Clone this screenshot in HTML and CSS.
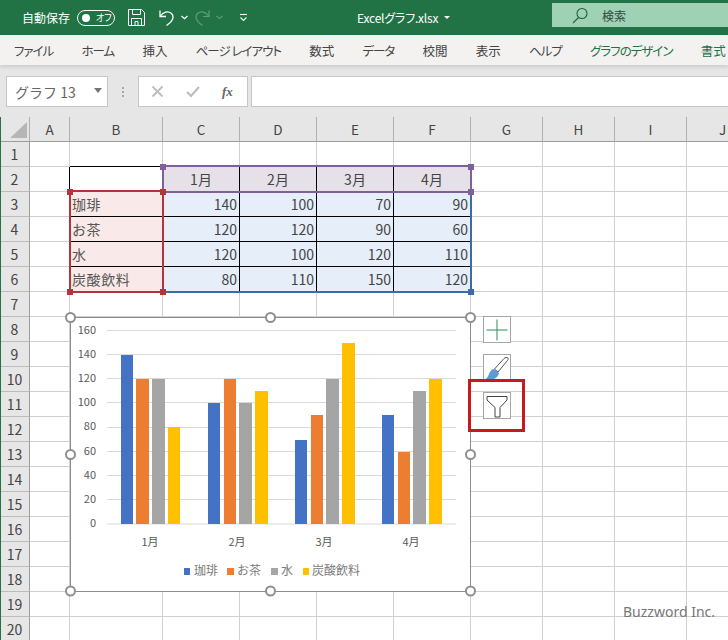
FILE: index.html
```html
<!DOCTYPE html>
<html lang="ja">
<head>
<meta charset="utf-8">
<title>Excelグラフ.xlsx</title>
<link rel="stylesheet" href="styles.css">
</head>
<body>
<div class="app">
  <header class="titlebar">
    <span class="autosave">自動保存</span>
    <span class="toggle"><i class="dot"></i><span class="off">オフ</span></span>
    <svg class="qa save" width="17" height="17" viewBox="0 0 17 17" fill="none" stroke="#fff" stroke-width="1"><path d="M.5.5h13l3 3v13H.5z"/><path d="M4.5.5v5h8v-5M3.5 16.5v-7h10v7M7 16.5v-4h3v4"/></svg>
    <svg class="qa undo" width="16" height="17" viewBox="0 0 16 17" fill="none" stroke="#fff" stroke-width="1.3"><path d="M1 1.5v6h6"/><path d="M1.5 7C4 3 9 1.500 12.500 4.500c3 3 1.500 8-5 12"/></svg>
    <svg class="qa chev" width="7" height="5" viewBox="0 0 7 5" fill="none" stroke="#fff" stroke-width="1.200"><path d="M.5 1l3 2.600 3-2.600"/></svg>
    <svg class="qa redo" width="16" height="17" viewBox="0 0 16 17" fill="none" stroke="#5f9c7d" stroke-width="1.200"><path d="M15 1.500v6H9"/><path d="M14.500 7C12 3 7 1.500 3.500 4.500c-3 3-1.500 8 5 12"/></svg>
    <svg class="qa chev2" width="7" height="5" viewBox="0 0 7 5" fill="none" stroke="#5f9c7d" stroke-width="1.100"><path d="M.5 1l3 2.600 3-2.600"/></svg>
    <svg class="qa custom" width="7" height="9" viewBox="0 0 7 9" fill="none" stroke="#fff" stroke-width="1.100"><path d="M0 1.500h7"/><path d="M.5 4.500l3 3 3-3" /></svg>
    <span class="doc">Excelグラフ.xlsx</span>
    <span class="doc-arrow"></span>
    <div class="search">
      <svg width="16" height="17" viewBox="0 0 16 17" fill="none" stroke="#1f5f40" stroke-width="1.100"><circle cx="10" cy="6.500" r="5"/><path d="M6.500 10.500L1 16"/></svg>
      <span>検索</span>
    </div>
  </header>

  <nav class="ribbon">
    <span class="kana">ファイル</span><span class="kana">ホーム</span><span>挿入</span><span class="kana">ページ レイアウト</span><span>数式</span><span class="kana">データ</span><span>校閲</span><span>表示</span><span class="kana">ヘルプ</span><span class="ctx kana">グラフのデザイン</span><span class="ctx">書式</span>
  </nav>

  <section class="formula">
    <div class="namebox"><span>グラフ 13</span><i class="name-arrow"></i></div>
    <div class="grip"><i></i><i></i><i></i></div>
    <div class="fx-buttons">
      <svg width="13" height="13" viewBox="0 0 13 13" stroke="#bdbdbd" stroke-width="1.800" fill="none"><path d="M1.500 1.500l10 10M11.500 1.500l-10 10"/></svg>
      <svg width="14" height="13" viewBox="0 0 14 13" stroke="#bdbdbd" stroke-width="2.200" fill="none"><path d="M1 7l4 4 8-9"/></svg>
      <span class="fx">fx</span>
    </div>
    <div class="input"></div>
  </section>

  <main class="sheet">
    <div class="corner"><i></i></div><div class="ch">A</div><div class="ch">B</div><div class="ch">C</div><div class="ch">D</div><div class="ch">E</div><div class="ch">F</div><div class="ch">G</div><div class="ch">H</div><div class="ch">I</div><div class="ch">J</div>

    <div class="rh">1</div><div></div><div class="kb"></div><div></div><div></div><div></div><div></div><div></div><div></div><div></div><div></div>
    <div class="rh">2</div><div class="kr"></div><div></div><div class="head kr">1月</div><div class="head kr">2月</div><div class="head kr">3月</div><div class="head">4月</div><div></div><div></div><div></div><div></div>
    <div class="rh">3</div><div></div><div class="lab kb">珈琲</div><div class="num kb kr">140</div><div class="num kb kr">100</div><div class="num kb kr">70</div><div class="num kb">90</div><div></div><div></div><div></div><div></div>
    <div class="rh">4</div><div></div><div class="lab kb">お茶</div><div class="num kb kr">120</div><div class="num kb kr">120</div><div class="num kb kr">90</div><div class="num kb">60</div><div></div><div></div><div></div><div></div>
    <div class="rh">5</div><div></div><div class="lab kb">水</div><div class="num kb kr">120</div><div class="num kb kr">100</div><div class="num kb kr">120</div><div class="num kb">110</div><div></div><div></div><div></div><div></div>
    <div class="rh">6</div><div></div><div class="lab">炭酸飲料</div><div class="num kr">80</div><div class="num kr">110</div><div class="num kr">150</div><div class="num">120</div><div></div><div></div><div></div><div></div>
    <div class="rh">7</div><div></div><div></div><div></div><div></div><div></div><div></div><div></div><div></div><div></div><div></div>
    <div class="rh">8</div><div></div><div></div><div></div><div></div><div></div><div></div><div></div><div></div><div></div><div></div>
    <div class="rh">9</div><div></div><div></div><div></div><div></div><div></div><div></div><div></div><div></div><div></div><div></div>
    <div class="rh">10</div><div></div><div></div><div></div><div></div><div></div><div></div><div></div><div></div><div></div><div></div>
    <div class="rh">11</div><div></div><div></div><div></div><div></div><div></div><div></div><div></div><div></div><div></div><div></div>
    <div class="rh">12</div><div></div><div></div><div></div><div></div><div></div><div></div><div></div><div></div><div></div><div></div>
    <div class="rh">13</div><div></div><div></div><div></div><div></div><div></div><div></div><div></div><div></div><div></div><div></div>
    <div class="rh">14</div><div></div><div></div><div></div><div></div><div></div><div></div><div></div><div></div><div></div><div></div>
    <div class="rh">15</div><div></div><div></div><div></div><div></div><div></div><div></div><div></div><div></div><div></div><div></div>
    <div class="rh">16</div><div></div><div></div><div></div><div></div><div></div><div></div><div></div><div></div><div></div><div></div>
    <div class="rh">17</div><div></div><div></div><div></div><div></div><div></div><div></div><div></div><div></div><div></div><div></div>
    <div class="rh">18</div><div></div><div></div><div></div><div></div><div></div><div></div><div></div><div></div><div></div><div></div>
    <div class="rh">19</div><div></div><div></div><div></div><div></div><div></div><div></div><div></div><div></div><div></div><div></div>
    <div class="rh">20</div><div></div><div></div><div></div><div></div><div></div><div></div><div></div><div></div><div></div><div></div>
  </main>

  <!-- source-range highlights over the grid -->
  <div class="range r-blue"></div>
  <div class="range r-purple"></div>
  <div class="range r-red"></div>
  <i class="h-sq purple h2"></i><i class="h-sq purple h3"></i><i class="h-sq purple h4"></i><i class="h-sq red h1"></i><i class="h-sq red h6"></i><i class="h-sq red h7"></i><i class="h-sq red h8"></i><i class="h-sq blue h9"></i>

  <!-- chart object -->
  <svg class="chart" viewBox="62 309 418 290" width="418" height="290">
    <rect class="frame" x="70.500" y="317.500" width="400" height="274"/>
    <g class="gl">
      <path d="M107 330.500h349M107 354.500h349M107 378.500h349M107 402.500h349M107 427.500h349M107 451.500h349M107 475.500h349M107 499.500h349M107 524h349"/>
    </g>
    <g class="b1">
      <rect x="121" y="355" width="12" height="169"/><rect x="208" y="403" width="12" height="121"/><rect x="295" y="440" width="12" height="84"/><rect x="382" y="415" width="12" height="109"/>
    </g>
    <g class="b2">
      <rect x="136" y="379" width="13" height="145"/><rect x="224" y="379" width="12" height="145"/><rect x="311" y="415" width="12" height="109"/><rect x="398" y="452" width="12" height="72"/>
    </g>
    <g class="b3">
      <rect x="152" y="379" width="13" height="145"/><rect x="239" y="403" width="13" height="121"/><rect x="326" y="379" width="13" height="145"/><rect x="413" y="391" width="13" height="133"/>
    </g>
    <g class="b4">
      <rect x="168" y="427" width="12" height="97"/><rect x="255" y="391" width="13" height="133"/><rect x="342" y="343" width="13" height="181"/><rect x="429" y="379" width="13" height="145"/>
    </g>
    <g class="ya">
      <text x="96" y="334">160</text><text x="96" y="358">140</text><text x="96" y="382">120</text><text x="96" y="406">100</text><text x="96" y="430">80</text><text x="96" y="455">60</text><text x="96" y="479">40</text><text x="96" y="503">20</text><text x="96" y="527">0</text>
    </g>
    <g class="xa">
      <text x="150" y="546">1月</text><text x="237" y="546">2月</text><text x="324" y="546">3月</text><text x="411" y="546">4月</text>
    </g>
    <g class="lg">
      <rect class="s1" x="184" y="568" width="6" height="7"/><text x="194" y="575">珈琲</text>
      <rect class="s2" x="227" y="568" width="7" height="7"/><text x="237" y="575">お茶</text>
      <rect class="s3" x="271" y="568" width="7" height="7"/><text x="281" y="575">水</text>
      <rect class="s4" x="303" y="568" width="6" height="7"/><text x="312" y="575">炭酸飲料</text>
    </g>
    <g class="hd">
      <circle cx="70.500" cy="317.500" r="4.500"/><circle cx="270.500" cy="317.500" r="4.500"/><circle cx="470.500" cy="317.500" r="4.500"/><circle cx="70.500" cy="454.500" r="4.500"/><circle cx="470.500" cy="454.500" r="4.500"/><circle cx="70.500" cy="591" r="4.500"/><circle cx="270.500" cy="591" r="4.500"/><circle cx="470.500" cy="591" r="4.500"/>
    </g>
  </svg>

  <!-- chart side buttons -->
  <div class="side">
    <button class="sb"><svg width="26" height="26" viewBox="0 0 26 26" fill="none" stroke="#2f8f55" stroke-width="1"><path d="M13 2.500v21M2.500 13h21"/></svg></button>
    <button class="sb"><svg width="28" height="27" viewBox="0 0 28 27" fill="none"><path d="M25 4c.500 1 0 2-1 3L15 18l-3.500-3L21 4.500c1-1 3-1.500 4-.500z" fill="#fff" stroke="#555" stroke-width="1"/><path d="M11 15l5 4c-1 4-4 6.500-8 6.500H2c2-1 3-3 4-5.500 1-3 3-5 5-5z" fill="#5b9bd5"/></svg></button>
    <button class="sb"><svg width="24" height="26" viewBox="0 0 24 26" fill="none" stroke="#444" stroke-width="1"><path d="M2 3.500h20v3.500l-7 7.500V24H10v-9.500L2 7z"/></svg></button>
  </div>
  <div class="callout"></div>

  <div class="mark">Buzzword Inc.</div>
</div>
</body>
</html>
```
FILE: styles.css
```css
* { box-sizing: border-box; }
html, body { margin: 0; padding: 0; height: 100%; overflow: hidden; background: #fff; }
body { font-family: "Noto Sans CJK JP", "Noto Sans", sans-serif; color: #444; }
.app { position: relative; width: 728px; height: 640px; overflow: hidden; }

/* title bar */
.titlebar { height: 35px; background: #217346; color: #fff; display: flex; align-items: center; padding-left: 22px; font-size: 12px; }
.autosave { width: 48px; font-size: 12px; white-space: nowrap; }
.toggle { margin-left: 7px; width: 38px; height: 16px; border: 1px solid #fff; border-radius: 8px; display: flex; align-items: center; padding-left: 4px; }
.dot { width: 8px; height: 8px; border-radius: 50%; background: #fff; }
.off { font-size: 9px; margin-left: 6px; line-height: 1; font-feature-settings: "palt"; white-space: nowrap; }
.qa { flex: none; display: block; }
.save { margin-left: 13px; }
.undo { margin-left: 14px; }
.chev { margin-left: 6px; }
.redo { margin-left: 6px; }
.chev2 { margin-left: 6px; }
.custom { margin-left: 17px; }
.doc { margin-left: 110px; font-size: 12px; width: 82px; white-space: nowrap; font-feature-settings: "palt"; letter-spacing: -.2px; }
.doc-arrow { margin-left: 5px; width: 0; height: 0; border: 3px solid transparent; border-top: 3px solid #fff; border-bottom: 0; }
.search { margin-left: auto; margin-top: -5px; width: 176px; height: 24px; background: #9fd1b4; color: #2c4c3c; display: flex; align-items: center; padding-left: 20px; gap: 14px; font-size: 12px; flex: none; }

/* ribbon */
.ribbon { height: 30px; background: #f3f2f1; display: flex; align-items: center; padding-left: 14px; gap: 28.200px; font-size: 12.500px; color: #444; white-space: nowrap; box-shadow: 0 2px 4px rgba(0, 0, 0, .12); position: relative; font-feature-settings: "palt"; }
.kana { letter-spacing: -1px; }
.ctx { color: #217346; }

/* formula bar */
.formula { height: 52px; background: #e6e6e6; display: flex; align-items: flex-start; padding: 11px 0 0 6px; }
.namebox { width: 102px; height: 31px; background: #fff; border: 1px solid #c6c6c6; display: flex; align-items: center; padding-left: 8px; font-size: 14px; color: #666; position: relative; }
.name-arrow { position: absolute; right: 5px; top: 11px; border: 4px solid transparent; border-top: 5px solid #777; border-bottom: 0; }
.grip { width: 30px; height: 31px; display: flex; flex-direction: column; align-items: center; justify-content: center; gap: 2px; }
.grip i { width: 2px; height: 2px; background: #a8a8a8; }
.fx-buttons { width: 110px; height: 31px; background: #fff; border: 1px solid #c6c6c6; display: flex; align-items: center; padding-left: 12px; gap: 22px; }
.fx { font-family: "Liberation Serif", serif; font-style: italic; font-weight: bold; font-size: 13px; color: #666; }
.input { margin-left: 3px; flex: 1; height: 31px; background: #fff; border: 1px solid #c6c6c6; border-right: 0; }

/* sheet */
.sheet { display: grid; grid-template-columns: 29px 40px 93px 77px 77px 77px 77px 72px 72px 72px 72px; grid-template-rows: 25px; grid-auto-rows: 25px; width: 759px; border-left: 1px solid #217346; font-size: 14px; line-height: 24px; color: #444; }
.sheet > div { border-right: 1px solid #d0d0d0; border-bottom: 1px solid #d0d0d0; }
.sheet > .ch { background: #e6e6e6; text-align: center; border-right-color: #b0b0b0; border-bottom-color: #9c9c9c; color: #444; font-size: 13.500px; }
.sheet > .corner { background: #e6e6e6; border-right-color: #b0b0b0; border-bottom-color: #9c9c9c; position: relative; }
.corner i { position: absolute; left: 9px; top: 5px; width: 17px; height: 16px; background: #b6b6b6; clip-path: polygon(100% 0, 100% 100%, 0 100%); }
.sheet > .rh { background: #e6e6e6; text-align: center; border-right-color: #9c9c9c; border-bottom-color: #bcbcbc; font-size: 14px; padding-right: 1px; }
.sheet > .head { background: #e6e0e8; text-align: center; }
.sheet > .lab { background: #f9e9e8; padding-left: 2px; letter-spacing: .6px; color: #555; }
.sheet > .num { background: #e6eef9; text-align: right; padding-right: 2px; }
.sheet > .kr { border-right-color: #000; }
.sheet > .kb { border-bottom-color: #000; }

/* range highlights */
.range { position: absolute; }
.r-blue { left: 164px; top: 193px; width: 308px; height: 100px; border-right: 2px solid #3b6ca5; border-bottom: 2px solid #3b6ca5; }
.r-purple { left: 162px; top: 165px; width: 310px; height: 28px; border: 2px solid #7f5f9c; }
.r-red { left: 69px; top: 190px; width: 95px; height: 103px; border: 2px solid #b5343c; }
.h-sq { position: absolute; width: 6px; height: 6px; }
.h-sq.red { background: #b5343c; }
.h-sq.purple { background: #7f5f9c; }
.h-sq.blue { background: #3b6ca5; }
.h1 { left: 67px; top: 189px; }
.h2 { left: 160px; top: 164px; }
.h3 { left: 468px; top: 164px; }
.h4 { left: 468px; top: 189px; }
.h6 { left: 160px; top: 189px; }
.h7 { left: 67px; top: 289px; }
.h8 { left: 160px; top: 289px; }
.h9 { left: 468px; top: 289px; }

/* chart */
.chart { position: absolute; left: 62px; top: 309px; display: block; }
.frame { fill: #fff; stroke: #8c8c8c; stroke-width: 1; }
.gl path { stroke: #d9d9d9; stroke-width: 1; fill: none; }
.b1, .s1 { fill: #4472c4; }
.b2, .s2 { fill: #ed7d31; }
.b3, .s3 { fill: #a5a5a5; }
.b4, .s4 { fill: #ffc000; }
.ya text { font-size: 11px; fill: #595959; text-anchor: end; }
.xa text { font-size: 11px; fill: #595959; text-anchor: middle; }
.lg text { font-size: 12px; fill: #7a7a7a; }
.hd circle { fill: #fff; stroke: #8f8f8f; stroke-width: 2; }

/* side buttons */
.side { position: absolute; left: 483px; top: 316px; display: flex; flex-direction: column; gap: 11px; }
.sb { width: 28px; height: 27px; padding: 0; background: #fff; border: 1px solid #a6a6a6; display: flex; align-items: center; justify-content: center; }
.sb svg { display: block; flex: none; }
.callout { position: absolute; left: 468px; top: 379px; width: 57px; height: 53px; border: 3px solid #c8191e; }

.mark { position: absolute; left: 623px; top: 602px; font-family: "Noto Sans", sans-serif; font-size: 14px; line-height: 20px; color: #777; white-space: nowrap; }
```
